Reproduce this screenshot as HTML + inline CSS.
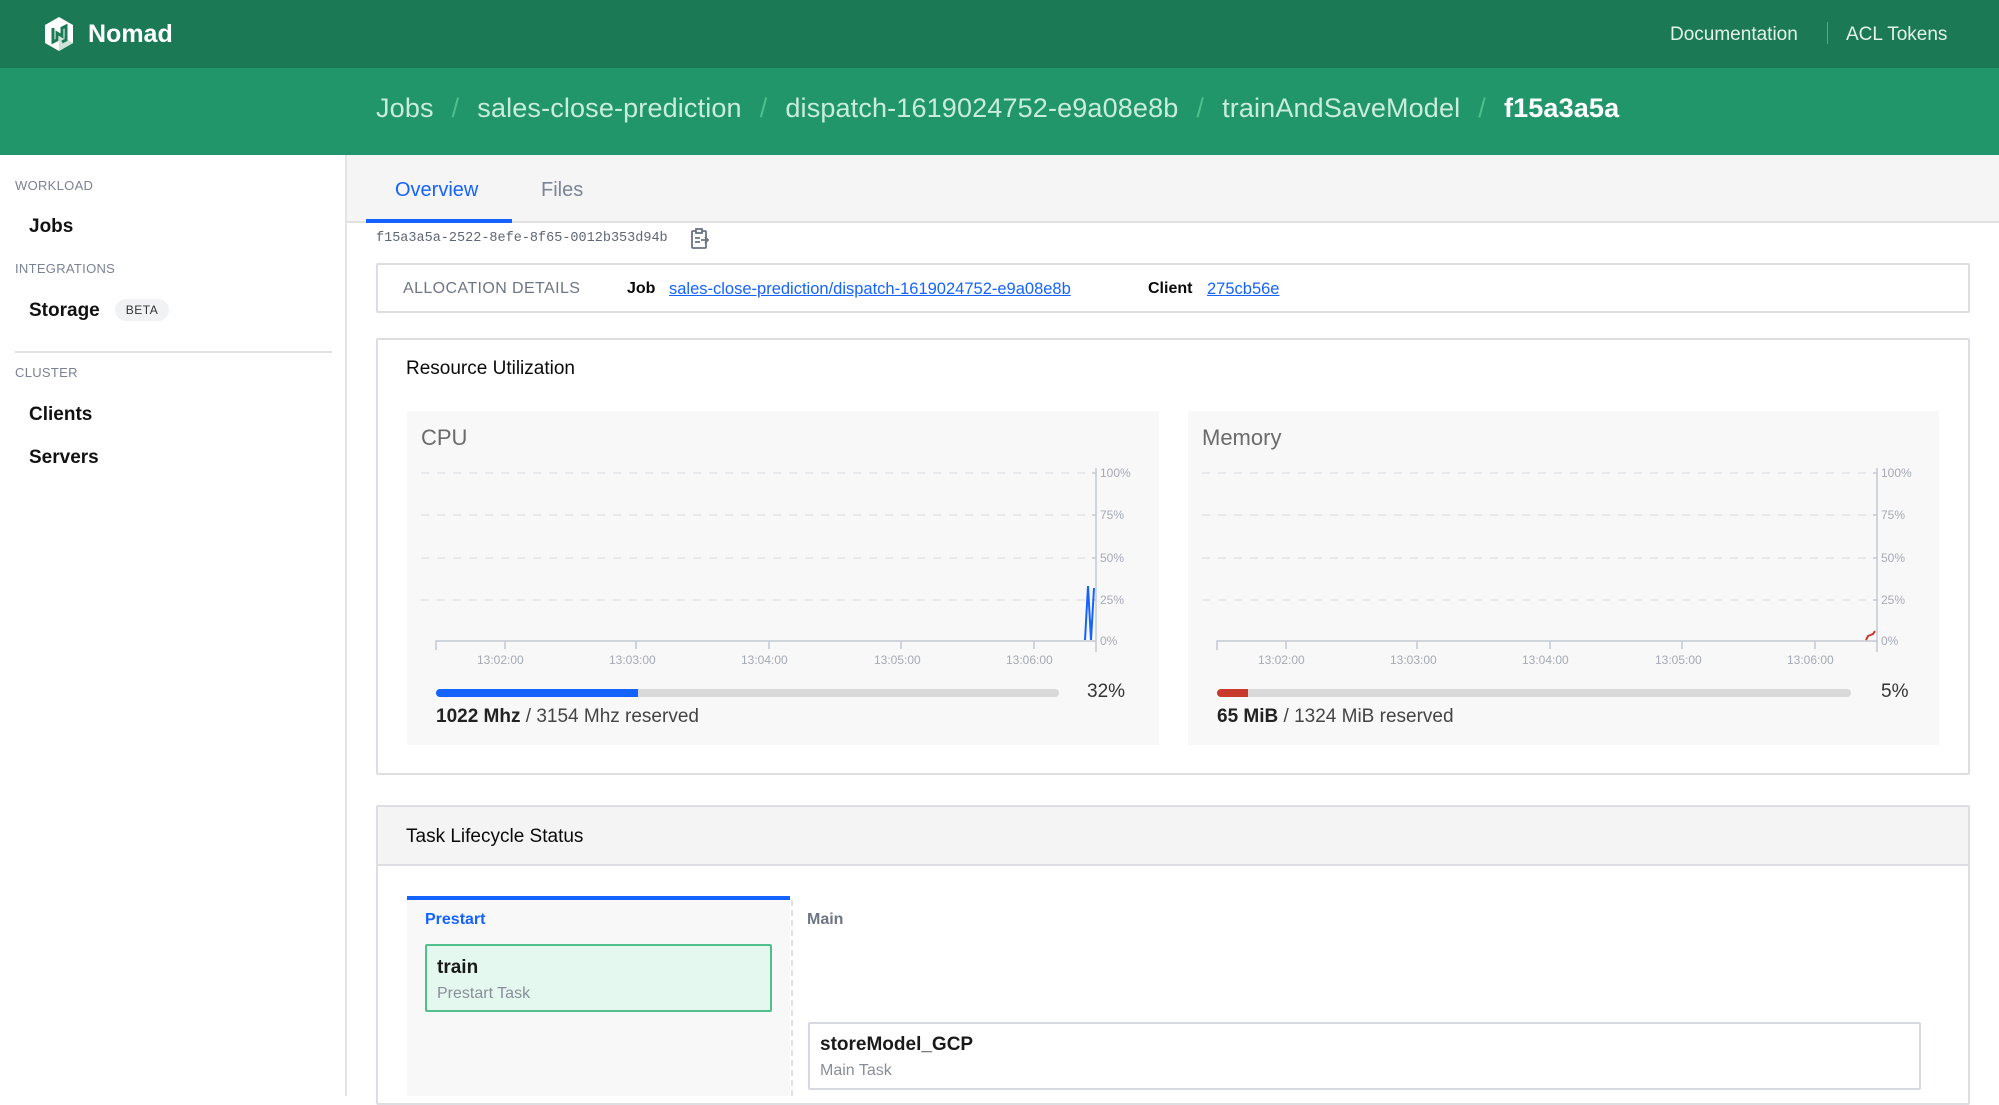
<!DOCTYPE html>
<html><head><meta charset="utf-8"><style>
*{box-sizing:border-box;margin:0;padding:0}
body{width:1999px;height:1096px;overflow:hidden;font-family:"Liberation Sans",sans-serif;background:#fff;position:relative;color:#0a0a0a}
.a{position:absolute;white-space:nowrap}
.top{left:0;top:0;width:1999px;height:68px;background:#1b7a55}
.sub{left:0;top:68px;width:1999px;height:87px;background:#21966a}
.bc{top:93px;font-size:27px;color:#c9ecdc;letter-spacing:.15px}
.sl{color:#4fbf8c;display:inline-block;padding:0 18px}
.side{font-size:13px;color:#7a8294;letter-spacing:.3px}
.nav{font-size:19px;color:#111;font-weight:bold}
.box{border:2px solid #dcdee4;border-radius:2px}
.lbl{font-size:12px;fill:#a4aab6;font-family:"Liberation Sans",sans-serif}
a{color:#1563ff;text-decoration:underline}
</style></head><body>
<div class="a top"></div><div class="a sub"></div>
<svg class="a" style="left:44px;top:16px" width="30" height="36" viewBox="0 0 30 36"><path d="M15 1 L29 9 V27 L15 35 L1 27 V9 Z" fill="#fff"/><path d="M15 18 L29 27 L15 35 Z" fill="#cde3d9"/><path d="M9 12 V26 L13 24 V17 L18 20 V12 L22 10 V24 L18 26" fill="none" stroke="#1b7a55" stroke-width="3"/></svg>
<div class="a" style="left:88px;top:20px;font-size:25px;font-weight:bold;color:#fff">Nomad</div>
<div class="a" style="left:1670px;top:24px;font-size:19px;color:#e3f2ea">Documentation</div>
<div class="a" style="left:1827px;top:22px;width:1px;height:22px;background:#5aa886"></div>
<div class="a" style="left:1846px;top:24px;font-size:19px;color:#e3f2ea">ACL Tokens</div>
<div class="a bc" style="left:376px">Jobs<span class="sl">/</span>sales-close-prediction<span class="sl">/</span>dispatch-1619024752-e9a08e8b<span class="sl">/</span>trainAndSaveModel<span class="sl">/</span><b style="color:#fff">f15a3a5a</b></div>

<div class="a" style="left:345px;top:155px;width:2px;height:941px;background:#e4e4e4"></div>
<div class="a side" style="left:15px;top:178px">WORKLOAD</div>
<div class="a nav" style="left:29px;top:216px">Jobs</div>
<div class="a side" style="left:15px;top:261px">INTEGRATIONS</div>
<div class="a nav" style="left:29px;top:300px">Storage</div>
<div class="a" style="left:115px;top:299px;width:54px;height:22px;border-radius:11px;background:#f1f2f4;font-size:12px;color:#333;text-align:center;line-height:22px;letter-spacing:.5px">BETA</div>
<div class="a" style="left:15px;top:351px;width:317px;height:2px;background:#e1e1e1"></div>
<div class="a side" style="left:15px;top:365px">CLUSTER</div>
<div class="a nav" style="left:29px;top:404px">Clients</div>
<div class="a nav" style="left:29px;top:447px">Servers</div>

<div class="a" style="left:347px;top:155px;width:1652px;height:68px;background:#f5f5f5;border-bottom:2px solid #e1e1e1"></div>
<div class="a" style="left:366px;top:219px;width:146px;height:4px;background:#1563ff"></div>
<div class="a" style="left:395px;top:179px;font-size:20px;color:#1563ff">Overview</div>
<div class="a" style="left:541px;top:179px;font-size:20px;color:#7b8595">Files</div>
<div class="a" style="left:376px;top:231px;font-size:13.5px;font-family:'Liberation Mono',monospace;color:#5f6675">f15a3a5a-2522-8efe-8f65-0012b353d94b</div>
<svg class="a" style="left:690px;top:228px" width="20" height="22" viewBox="0 0 20 22" fill="none" stroke="#6a7384" stroke-width="1.8"><rect x="2" y="3" width="14" height="17" rx="1"/><rect x="6" y="1" width="6" height="4" fill="#fff"/><path d="M5 10h5M5 14h5M11 12h7M15 9l3 3-3 3"/></svg>

<div class="a box" style="left:376px;top:263px;width:1594px;height:50px"></div>
<div class="a" style="left:403px;top:280px;font-size:16px;color:#6e7584;letter-spacing:.4px">ALLOCATION DETAILS</div>
<div class="a" style="left:627px;top:280px;font-size:16px;font-weight:bold">Job</div>
<div class="a" style="left:669px;top:280px;font-size:16.5px"><a>sales-close-prediction/dispatch-1619024752-e9a08e8b</a></div>
<div class="a" style="left:1148px;top:280px;font-size:16px;font-weight:bold">Client</div>
<div class="a" style="left:1207px;top:280px;font-size:16.5px"><a>275cb56e</a></div>

<div class="a box" style="left:376px;top:338px;width:1594px;height:437px"></div>
<div class="a" style="left:406px;top:358px;font-size:19px">Resource Utilization</div>

<div class="a" style="left:407px;top:411px;width:752px;height:334px;background:#f8f8f8"></div>
<div class="a" style="left:1188px;top:411px;width:751px;height:334px;background:#f8f8f8"></div>
<div class="a" style="left:421px;top:425px;font-size:22px;color:#6b6b6b">CPU</div>
<div class="a" style="left:1202px;top:425px;font-size:22px;color:#6b6b6b">Memory</div>
<svg class="a" style="left:0;top:0" width="1999" height="760">
<g stroke="#dde0e6" stroke-dasharray="8 8" stroke-width="1.3">
<path d="M421 473H1092M421 515H1092M421 558H1092M421 600H1092"/>
<path d="M1202 473H1873M1202 515H1873M1202 558H1873M1202 600H1873"/></g>
<g stroke="#c3c9d3" stroke-width="1.5" fill="none">
<path d="M436 650V641H1096M1096 468V652M1092 473h4M1092 515h4M1092 558h4M1092 600h4M505 641v8M636 641v8M769 641v8M901 641v8M1034 641v8"/>
<path d="M1217 650V641H1877M1877 468V652M1873 473h4M1873 515h4M1873 558h4M1873 600h4M1286 641v8M1417 641v8M1550 641v8M1682 641v8M1815 641v8"/></g>
<g class="lbl"><text x="1100" y="477">100%</text><text x="1100" y="519">75%</text><text x="1100" y="562">50%</text><text x="1100" y="604">25%</text><text x="1100" y="645">0%</text>
<text x="477" y="664">13:02:00</text><text x="609" y="664">13:03:00</text><text x="741" y="664">13:04:00</text><text x="874" y="664">13:05:00</text><text x="1006" y="664">13:06:00</text>
<text x="1881" y="477">100%</text><text x="1881" y="519">75%</text><text x="1881" y="562">50%</text><text x="1881" y="604">25%</text><text x="1881" y="645">0%</text>
<text x="1258" y="664">13:02:00</text><text x="1390" y="664">13:03:00</text><text x="1522" y="664">13:04:00</text><text x="1655" y="664">13:05:00</text><text x="1787" y="664">13:06:00</text></g>
<path d="M1085 640L1088 586L1091 640L1094 588" stroke="#1563ff" stroke-width="2" fill="none"/>
<path d="M1866 640L1868 636L1873 634L1875 631" stroke="#c73a2c" stroke-width="2" fill="none"/>
</svg>
<div class="a" style="left:436px;top:689px;width:623px;height:8px;border-radius:4px;background:#d9d9d9;overflow:hidden"><div style="width:202px;height:8px;background:#1563ff"></div></div>
<div class="a" style="left:1087px;top:681px;font-size:19px;color:#333">32%</div>
<div class="a" style="left:436px;top:706px;font-size:19px;color:#444"><b style="color:#222">1022 Mhz</b> / 3154 Mhz reserved</div>
<div class="a" style="left:1217px;top:689px;width:634px;height:8px;border-radius:4px;background:#d9d9d9;overflow:hidden"><div style="width:31px;height:8px;background:#c73a2c"></div></div>
<div class="a" style="left:1881px;top:681px;font-size:19px;color:#333">5%</div>
<div class="a" style="left:1217px;top:706px;font-size:19px;color:#444"><b style="color:#222">65 MiB</b> / 1324 MiB reserved</div>

<div class="a box" style="left:376px;top:805px;width:1594px;height:300px"></div>
<div class="a" style="left:378px;top:807px;width:1590px;height:59px;background:#f4f4f4;border-bottom:2px solid #dcdee4"></div>
<div class="a" style="left:406px;top:826px;font-size:19px">Task Lifecycle Status</div>
<div class="a" style="left:407px;top:896px;width:383px;height:200px;background:#f8f8f8;border-top:4px solid #1563ff"></div>
<div class="a" style="left:791px;top:900px;height:196px;border-left:2px dashed #e0e0e0"></div>
<div class="a" style="left:425px;top:911px;font-size:16px;color:#1563ff;font-weight:bold">Prestart</div>
<div class="a" style="left:807px;top:911px;font-size:16px;color:#6e7584;font-weight:bold">Main</div>
<div class="a" style="left:425px;top:944px;width:347px;height:68px;background:#e5f8f0;border:2px solid #52c08c;border-radius:2px"></div>
<div class="a" style="left:437px;top:957px;font-size:19px;font-weight:bold;color:#1a1a1a">train</div>
<div class="a" style="left:437px;top:985px;font-size:16px;color:#888e98">Prestart Task</div>
<div class="a" style="left:808px;top:1022px;width:1113px;height:68px;background:#fff;border:2px solid #d6d9e0;border-radius:2px"></div>
<div class="a" style="left:820px;top:1034px;font-size:19px;font-weight:bold;color:#1a1a1a">storeModel_GCP</div>
<div class="a" style="left:820px;top:1062px;font-size:16px;color:#888e98">Main Task</div>
</body></html>
